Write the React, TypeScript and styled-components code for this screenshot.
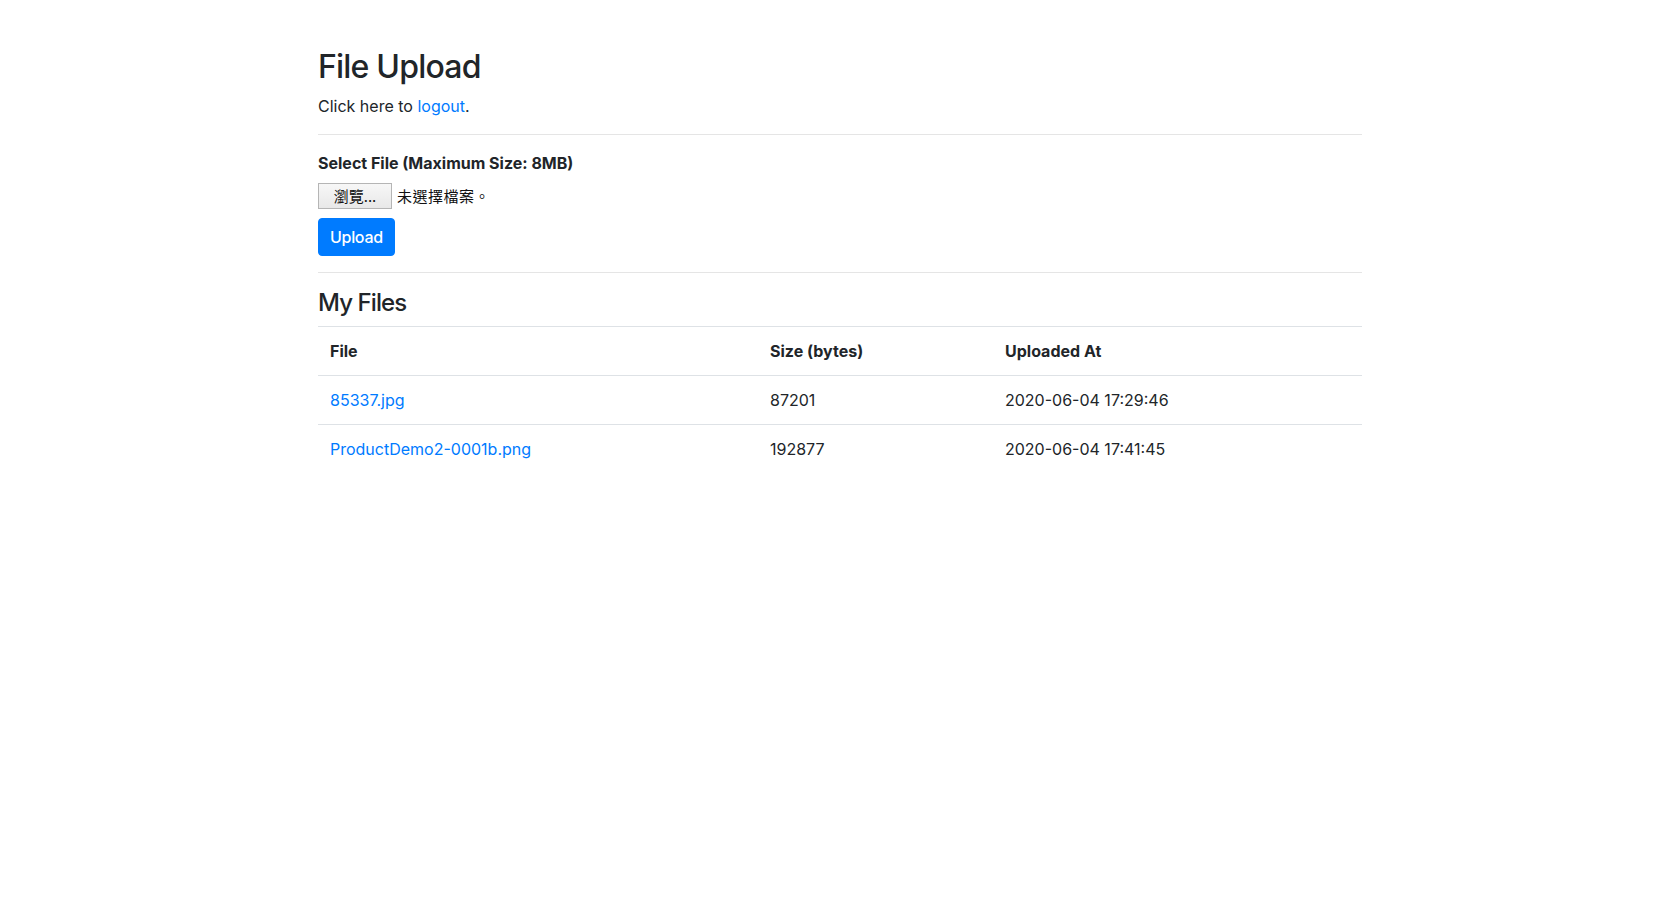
import React from "react";
import styled, { createGlobalStyle } from "styled-components";

const Global = createGlobalStyle`
  html, body { margin: 0; padding: 0; background: #fff; }
  body {
    font-family: Inter, "Noto Sans", "Noto Sans CJK TC", sans-serif;
    font-size: 16px;
    line-height: 1.5;
    color: #212529;
  }
`;

const Container = styled.div`
  width: 1044px;
  margin: 0 auto;
  padding-top: 48px;
`;

const Title = styled.h2`
  margin: 0 0 8px;
  font-size: 32px;
  font-weight: 500;
  line-height: 1.2;
  letter-spacing: -0.8px;
`;

const Para = styled.p`
  margin: 0;
`;

const Link = styled.a`
  color: #007bff;
  text-decoration: none;
`;

const Rule = styled.hr`
  margin: 16px 0;
  border: 0;
  border-top: 1px solid rgba(0, 0, 0, 0.1);
`;

const Label = styled.label`
  display: inline-block;
  font-weight: 700;
  margin-bottom: 8px;
`;

const FileRow = styled.div`
  display: flex;
  align-items: center;
  gap: 5px;
  height: 26px;
  margin-bottom: 9px;
  font-family: "Noto Sans CJK TC", sans-serif;
  font-size: 15px;
`;

const BrowseButton = styled.span`
  box-sizing: border-box;
  display: inline-flex;
  align-items: center;
  justify-content: center;
  width: 74px;
  height: 26px;
  border: 1px solid #b5b5b5;
  background: linear-gradient(#f7f7f7, #e8e8e8);
  color: #111;
  font-size: 15px;
`;

const NoFile = styled.span`
  color: #111;
  letter-spacing: 0.5px;
`;

const PrimaryButton = styled.button`
  display: inline-block;
  font-family: inherit;
  font-size: 16px;
  font-weight: 500;
  line-height: 1.5;
  padding: 6px 11px;
  border: 1px solid #007bff;
  border-radius: 4px;
  background: #007bff;
  color: #fff;
  letter-spacing: -0.3px;
`;

const Subtitle = styled.h4`
  margin: 0 0 8px;
  font-size: 24px;
  font-weight: 500;
  line-height: 1.2;
  letter-spacing: -0.9px;
`;

const Table = styled.table`
  width: 100%;
  border-collapse: collapse;
  table-layout: fixed;
`;

const Th = styled.th<{ $w: number }>`
  box-sizing: border-box;
  width: ${(p) => p.$w}px;
  text-align: left;
  font-weight: 700;
  padding: 12px;
  border-top: 1px solid #dee2e6;
  border-bottom: 1px solid #dee2e6;
`;

const Td = styled.td`
  padding: 12px;
  border-top: 1px solid #dee2e6;
`;

const files = [
  { name: "85337.jpg", size: "87201", at: "2020-06-04 17:29:46" },
  { name: "ProductDemo2-0001b.png", size: "192877", at: "2020-06-04 17:41:45" },
];

export default function App() {
  return (
    <>
      <Global />
      <Container>
        <Title>File Upload</Title>
        <Para>
          Click here to <Link href="#">logout</Link>.
        </Para>
        <Rule />
        <form onSubmit={(e) => e.preventDefault()}>
          <Label>Select File (Maximum Size: 8MB)</Label>
          <FileRow>
            <BrowseButton>瀏覽...</BrowseButton>
            <NoFile>未選擇檔案。</NoFile>
          </FileRow>
          <PrimaryButton type="submit">Upload</PrimaryButton>
        </form>
        <Rule />
        <Subtitle>My Files</Subtitle>
        <Table>
          <thead>
            <tr>
              <Th $w={440}>File</Th>
              <Th $w={235}>Size (bytes)</Th>
              <Th $w={369}>Uploaded At</Th>
            </tr>
          </thead>
          <tbody>
            {files.map((f) => (
              <tr key={f.name}>
                <Td>
                  <Link href="#">{f.name}</Link>
                </Td>
                <Td>{f.size}</Td>
                <Td>{f.at}</Td>
              </tr>
            ))}
          </tbody>
        </Table>
      </Container>
    </>
  );
}
